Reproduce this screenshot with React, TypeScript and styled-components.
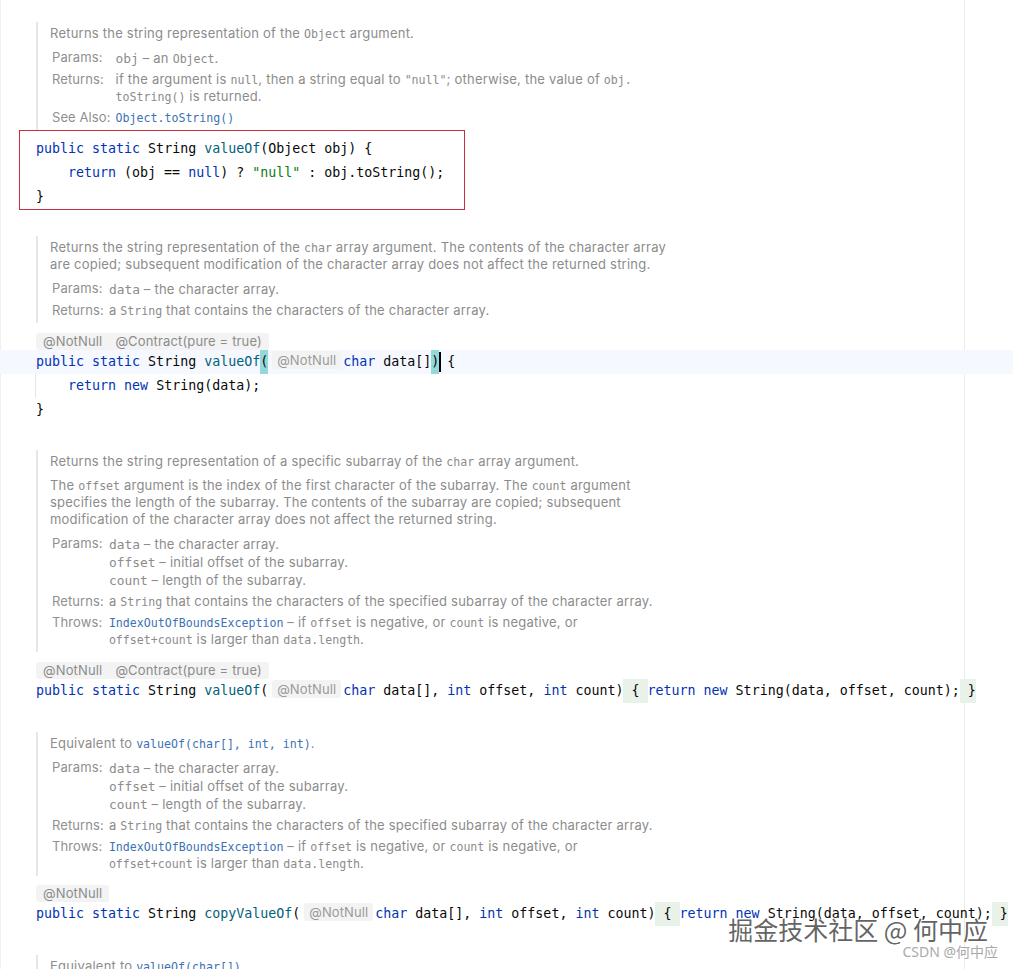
import React from 'react';
import styled, { createGlobalStyle } from 'styled-components';

const Global = createGlobalStyle`
  html, body { margin: 0; padding: 0; background: #fff; }
  body { width: 1013px; height: 969px; overflow: hidden; }
`;

const Editor = styled.div`
  position: relative;
  box-sizing: border-box;
  width: 1013px;
  height: 969px;
  overflow: hidden;
  padding-top: 22px;
  background:
    linear-gradient(to right, transparent 964px, #ebebeb 964px, #ebebeb 965px, transparent 965px),
    linear-gradient(to right, #f0f0f0 1px, transparent 1px),
    #fff;
  font-family: Inter, "Noto Sans", sans-serif;
`;

const DocBlock = styled.div<{ $mt: number }>`
  margin: ${p => p.$mt}px 0 0 36px;
  border-left: 2px solid #e6e6e6;
  padding: 3px 0 4px 12px;
  font-size: 13px;
  line-height: 17px;
  letter-spacing: 0.22px;
  color: #8c8c8c;
  white-space: nowrap;
`;

const Para = styled.div`
  margin: 0 0 7px;
  &:last-child { margin-bottom: 0; }
`;

const DocTable = styled.div<{ $mt?: number }>`
  display: grid;
  grid-template-columns: auto 1fr;
  column-gap: 5px;
  row-gap: 4px;
  margin-top: ${p => p.$mt ?? 0}px;
  padding-left: 2px;
`;

const Label = styled.div`
  color: #8f8f8f;
  letter-spacing: 0.1px;
`;

const Value = styled.div``;

const ParamLine = styled.div`
  line-height: 18px;
`;

const Mono = styled.span`
  font-family: "DejaVu Sans Mono", "Liberation Mono", monospace;
  font-size: 11.6px;
  line-height: 1;
  letter-spacing: 0;
`;

const PName = styled.span`
  font-family: "DejaVu Sans Mono", "Liberation Mono", monospace;
  font-size: 12.9px;
  line-height: 1;
  letter-spacing: 0;
`;

const Link = styled(Mono)`
  color: #3b72b4;
`;

const CodeBox = styled.div`
  box-sizing: border-box;
  width: 446px;
  height: 80px;
  margin-left: 19px;
  border: 1px solid #c4313d;
  padding: 6px 0 0 16px;
`;

const CodeLine = styled.div<{ $pad?: number; $current?: boolean; $guide?: boolean }>`
  height: 24px;
  line-height: 24px;
  padding-left: ${p => (p.$pad ?? 36)}px;
  font-family: "DejaVu Sans Mono", "Liberation Mono", monospace;
  font-size: 13.3px;
  color: #080808;
  white-space: pre;
  background-color: ${p => (p.$current ? '#f5f8fe' : 'transparent')};
  background-image: ${p => (p.$guide ? 'linear-gradient(#e6e6e6, #e6e6e6)' : 'none')};
  background-size: 1px 100%;
  background-repeat: no-repeat;
  background-position: ${p => (p.$pad ?? 36) - 1}px 0;
`;

const Kw = styled.span`color: #0033b3;`;
const Fn = styled.span`color: #00627a;`;
const Str = styled.span`color: #067d17;`;

const Brace = styled.span`
  display: inline-block;
  height: 24px;
  background: #93d9d9;
`;

const Fold = styled.span`
  display: inline-block;
  height: 24px;
  background: #e9f2e8;
`;

const Caret = styled.span`
  display: inline-block;
  width: 2px;
  height: 20px;
  margin-right: -2px;
  vertical-align: middle;
  background: #000;
`;

const Inlay = styled.span`
  display: inline-block;
  margin: 0 2px 0 4px;
  padding: 0 5px;
  height: 18px;
  line-height: 18px;
  border-radius: 3px;
  background: #f3f3f3;
  font-family: Inter, "Noto Sans", sans-serif;
  font-size: 13px;
  letter-spacing: 0.1px;
  color: #9a9a9a;
  vertical-align: 1px;
`;

const HintRow = styled.div<{ $mt: number }>`
  display: flex;
  margin-top: ${p => p.$mt}px;
  padding-left: 36px;
  height: 17px;
`;

const HintChip = styled.span`
  display: inline-flex;
  gap: 13px;
  padding: 0 7px;
  border-radius: 3px;
  background: #f3f3f3;
  font-size: 13px;
  line-height: 17px;
  letter-spacing: 0.15px;
  color: #8c8c8c;
`;

const Watermark = styled.div`
  position: absolute;
  right: 25px;
  top: 913px;
  font-family: "Noto Sans CJK SC", "Noto Sans", sans-serif;
  font-size: 25px;
  line-height: 32px;
  color: rgba(72, 72, 72, 0.85);
  text-shadow: 0 0 2px #fff, 0 0 1px #fff;
  white-space: nowrap;
`;

const Credit = styled.div`
  position: absolute;
  right: 15px;
  top: 943px;
  font-family: "Noto Sans", "Noto Sans CJK SC", sans-serif;
  font-size: 14px;
  line-height: 18px;
  color: #aaaaaa;
  white-space: nowrap;
`;

const ParamsBlock: React.FC = () => (
  <>
    <Label>Params:</Label>
    <Value>
      <ParamLine><PName>data</PName> – the character array.</ParamLine>
      <ParamLine><PName>offset</PName> – initial offset of the subarray.</ParamLine>
      <ParamLine><PName>count</PName> – length of the subarray.</ParamLine>
    </Value>
    <Label>Returns:</Label>
    <Value>a <Mono>String</Mono> that contains the characters of the specified subarray of the character array.</Value>
    <Label>Throws:</Label>
    <Value>
      <Link>IndexOutOfBoundsException</Link> – if <Mono>offset</Mono> is negative, or <Mono>count</Mono> is negative, or
      <br />
      <Mono>offset+count</Mono> is larger than <Mono>data.length</Mono>.
    </Value>
  </>
);

export default function App() {
  return (
    <>
      <Global />
      <Editor>
        <DocBlock $mt={0}>
          <Para>Returns the string representation of the <Mono>Object</Mono> argument.</Para>
          <DocTable>
            <Label>Params:</Label>
            <Value><ParamLine><PName>obj</PName> – an <Mono>Object</Mono>.</ParamLine></Value>
            <Label>Returns:</Label>
            <Value>
              if the argument is <Mono>null</Mono>, then a string equal to <Mono>"null"</Mono>; otherwise, the value of <Mono>obj.</Mono>
              <br />
              <Mono>toString()</Mono> is returned.
            </Value>
            <Label>See Also:</Label>
            <Value><Link>Object.toString()</Link></Value>
          </DocTable>
        </DocBlock>

        <CodeBox>
          <CodeLine $pad={0}>
            <Kw>public</Kw> <Kw>static</Kw> String <Fn>valueOf</Fn>(Object obj) {'{'}
          </CodeLine>
          <CodeLine $pad={0} $guide>
            {'    '}<Kw>return</Kw> (obj == <Kw>null</Kw>) ? <Str>"null"</Str> : obj.toString();
          </CodeLine>
          <CodeLine $pad={0}>{'}'}</CodeLine>
        </CodeBox>

        <DocBlock $mt={26}>
          <Para>
            Returns the string representation of the <Mono>char</Mono> array argument. The contents of the character array
            <br />
            are copied; subsequent modification of the character array does not affect the returned string.
          </Para>
          <DocTable>
            <Label>Params:</Label>
            <Value><ParamLine><PName>data</PName> – the character array.</ParamLine></Value>
            <Label>Returns:</Label>
            <Value>a <Mono>String</Mono> that contains the characters of the character array.</Value>
          </DocTable>
        </DocBlock>

        <HintRow $mt={10}>
          <HintChip><span>@NotNull</span><span>@Contract(pure = true)</span></HintChip>
        </HintRow>
        <CodeLine $current>
          <Kw>public</Kw> <Kw>static</Kw> String <Fn>valueOf</Fn><Brace>(</Brace><Inlay>@NotNull</Inlay><Kw>char</Kw> data[]<Brace>)</Brace><Caret /> {'{'}
        </CodeLine>
        <CodeLine $guide>
          {'    '}<Kw>return</Kw> <Kw>new</Kw> String(data);
        </CodeLine>
        <CodeLine>{'}'}</CodeLine>

        <DocBlock $mt={28}>
          <Para>Returns the string representation of a specific subarray of the <Mono>char</Mono> array argument.</Para>
          <Para>
            The <Mono>offset</Mono> argument is the index of the first character of the subarray. The <Mono>count</Mono> argument
            <br />
            specifies the length of the subarray. The contents of the subarray are copied; subsequent
            <br />
            modification of the character array does not affect the returned string.
          </Para>
          <DocTable $mt={2}>
            <ParamsBlock />
          </DocTable>
        </DocBlock>

        <HintRow $mt={10}>
          <HintChip><span>@NotNull</span><span>@Contract(pure = true)</span></HintChip>
        </HintRow>
        <CodeLine>
          <Kw>public</Kw> <Kw>static</Kw> String <Fn>valueOf</Fn>(<Inlay>@NotNull</Inlay><Kw>char</Kw> data[], <Kw>int</Kw> offset, <Kw>int</Kw> count)<Fold> {'{'} </Fold><Kw>return</Kw> <Kw>new</Kw> String(data, offset, count);<Fold> {'}'}</Fold>
        </CodeLine>

        <DocBlock $mt={29}>
          <Para>Equivalent to <Link>valueOf(char[], int, int)</Link>.</Para>
          <DocTable>
            <ParamsBlock />
          </DocTable>
        </DocBlock>

        <HintRow $mt={9}>
          <HintChip><span>@NotNull</span></HintChip>
        </HintRow>
        <CodeLine>
          <Kw>public</Kw> <Kw>static</Kw> String <Fn>copyValueOf</Fn>(<Inlay>@NotNull</Inlay><Kw>char</Kw> data[], <Kw>int</Kw> offset, <Kw>int</Kw> count)<Fold> {'{'} </Fold><Kw>return</Kw> <Kw>new</Kw> String(data, offset, count);<Fold> {'}'}</Fold>
        </CodeLine>

        <DocBlock $mt={29}>
          <Para>Equivalent to <Link>valueOf(char[])</Link>.</Para>
        </DocBlock>

        <Watermark>掘金技术社区 @ 何中应</Watermark>
        <Credit>CSDN @何中应</Credit>
      </Editor>
    </>
  );
}
